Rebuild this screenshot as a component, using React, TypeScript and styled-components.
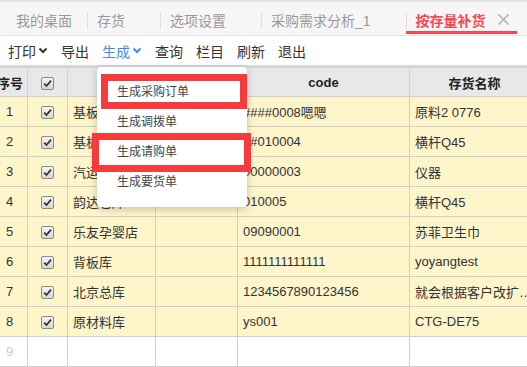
import React from 'react';
import styled, { createGlobalStyle } from 'styled-components';

const GlobalStyle = createGlobalStyle`
  html, body {
    margin: 0;
    padding: 0;
    background: #fff;
    overflow: hidden;
  }
  body {
    font-family: "Liberation Sans", "Noto Sans CJK SC", sans-serif;
    color: #333;
  }
`;

const Page = styled.div`
  position: relative;
  width: 527px;
  height: 367px;
  overflow: hidden;
`;

const TabBar = styled.div`
  display: flex;
  align-items: stretch;
  height: 33px;
  padding-left: 6px;
  background: #f6f6f6;
  border-top: 2px solid #e2e2e2;
  border-bottom: 1px solid #e6e6e6;
`;

const Tab = styled.div<{ $active?: boolean; $home?: boolean }>`
  position: relative;
  display: flex;
  align-items: center;
  padding: 2px ${p => (p.$home ? 15 : 10)}px 0 10px;
  font-size: 14px;
  white-space: nowrap;
  color: ${p => (p.$active ? '#f5484f' : '#999')};
  font-weight: ${p => (p.$active ? 'bold' : 'normal')};

  &::before {
    content: '';
    display: ${p => (p.$home ? 'none' : 'block')};
    position: absolute;
    left: 0;
    top: 10px;
    width: 1px;
    height: 17px;
    background: #dedede;
  }

  &::after {
    content: '';
    display: ${p => (p.$active ? 'block' : 'none')};
    position: absolute;
    left: 0;
    right: 4px;
    bottom: 1px;
    height: 3px;
    background: #f5484f;
  }
`;

const CloseSlot = styled.span<{ $visible?: boolean }>`
  display: inline-flex;
  width: 14px;
  margin-left: 11px;
  visibility: ${p => (p.$visible ? 'visible' : 'hidden')};
`;

const Toolbar = styled.div`
  display: flex;
  align-items: center;
  gap: 13px;
  height: 29px;
  padding-left: 8px;
  background: #fff;
  border-bottom: 2px solid #d9d9d9;
`;

const ToolItem = styled.span<{ $primary?: boolean }>`
  display: inline-flex;
  align-items: center;
  font-size: 14px;
  color: ${p => (p.$primary ? '#3b8cf5' : '#333')};
  white-space: nowrap;

  svg {
    margin-left: 2px;
  }
`;

const Grid = styled.div`
  overflow: hidden;
`;

const Table = styled.table`
  margin-left: -9px;
  width: 548px;
  table-layout: fixed;
  border-collapse: collapse;
  font-size: 13px;
`;

const HeadCell = styled.th`
  height: 28px;
  padding: 0 5px;
  background: #e8e8e8;
  border: 1px solid #cfcfcf;
  font-weight: bold;
  color: #222;
  text-align: center;
  white-space: nowrap;
  overflow: hidden;
`;

const Row = styled.tr<{ $empty?: boolean }>`
  background: ${p => (p.$empty ? '#fff' : '#fef5cb')};
`;

const Cell = styled.td<{ $center?: boolean; $muted?: boolean }>`
  height: 29px;
  padding: 0 5px;
  border: 1px solid #cfcfcf;
  color: ${p => (p.$muted ? '#ccc' : '#333')};
  text-align: ${p => (p.$center ? 'center' : 'left')};
  white-space: nowrap;
  overflow: hidden;
  text-overflow: ellipsis;
`;

const CheckBox = styled.span`
  display: inline-flex;
  align-items: center;
  justify-content: center;
  width: 11px;
  height: 11px;
  border: 1px solid #8a8a8a;
  border-radius: 2px;
  background: linear-gradient(#f5f5f5, #d6d6d6);
  vertical-align: middle;
`;

const Menu = styled.div`
  position: absolute;
  left: 97px;
  top: 67px;
  width: 150px;
  padding: 10px 0;
  background: #fff;
  border-radius: 4px;
  box-shadow: 0 2px 8px rgba(0, 0, 0, 0.22);
`;

const MenuItem = styled.div`
  height: 30px;
  line-height: 30px;
  padding-left: 20px;
  font-size: 12px;
  color: #444;
  white-space: nowrap;
`;

const Mark = styled.div<{ $left: number; $top: number; $w: number; $h: number }>`
  position: absolute;
  left: ${p => p.$left}px;
  top: ${p => p.$top}px;
  width: ${p => p.$w}px;
  height: ${p => p.$h}px;
  box-sizing: border-box;
  border: 7px solid #f53b3b;
`;

function Chevron({ color }: { color: string }) {
  return (
    <svg width="10" height="7" viewBox="0 0 10 7">
      <polyline points="1.5,1.5 5,5 8.5,1.5" fill="none" stroke={color} strokeWidth="2" />
    </svg>
  );
}

function CloseIcon() {
  return (
    <svg width="13" height="13" viewBox="0 0 13 13">
      <path d="M1.5 1.5 L11.5 11.5 M11.5 1.5 L1.5 11.5" stroke="#b0b0b0" strokeWidth="1.6" />
    </svg>
  );
}

function Check() {
  return (
    <CheckBox>
      <svg width="9" height="9" viewBox="0 0 9 9">
        <path d="M1.2 4.6 L3.5 7 L8 1.6" fill="none" stroke="#333" strokeWidth="1.8" />
      </svg>
    </CheckBox>
  );
}

const tabs = [
  { label: '我的桌面', home: true },
  { label: '存货' },
  { label: '选项设置' },
  { label: '采购需求分析_1' },
  { label: '按存量补货', active: true },
];

const rows = [
  { store: '基板库', code: '####0008嗯嗯', name: '原料2 0776' },
  { store: '基板仓', code: '0#010004', name: '横杆Q45' },
  { store: '汽运仓库', code: '00000003', name: '仪器' },
  { store: '韵达仓库', code: '010005', name: '横杆Q45' },
  { store: '乐友孕婴店', code: '09090001', name: '苏菲卫生巾' },
  { store: '背板库', code: '1111111111111', name: 'yoyangtest' },
  { store: '北京总库', code: '1234567890123456', name: '就会根据客户改扩展名称' },
  { store: '原材料库', code: 'ys001', name: 'CTG-DE75' },
];

const menuItems = ['生成采购订单', '生成调拨单', '生成请购单', '生成要货单'];

export default function App() {
  return (
    <Page>
      <GlobalStyle />
      <TabBar>
        {tabs.map(t => (
          <Tab key={t.label} $active={t.active} $home={t.home}>
            {t.label}
            {!t.home && (
              <CloseSlot $visible={t.active}>
                <CloseIcon />
              </CloseSlot>
            )}
          </Tab>
        ))}
      </TabBar>

      <Toolbar>
        <ToolItem>打印<Chevron color="#333" /></ToolItem>
        <ToolItem>导出</ToolItem>
        <ToolItem $primary>生成<Chevron color="#3b8cf5" /></ToolItem>
        <ToolItem>查询</ToolItem>
        <ToolItem>栏目</ToolItem>
        <ToolItem>刷新</ToolItem>
        <ToolItem>退出</ToolItem>
      </Toolbar>

      <Grid>
        <Table>
          <colgroup>
            <col style={{ width: 36 }} />
            <col style={{ width: 40 }} />
            <col style={{ width: 88 }} />
            <col style={{ width: 82 }} />
            <col style={{ width: 172 }} />
            <col style={{ width: 130 }} />
          </colgroup>
          <thead>
            <tr>
              <HeadCell>序号</HeadCell>
              <HeadCell><Check /></HeadCell>
              <HeadCell />
              <HeadCell />
              <HeadCell>code</HeadCell>
              <HeadCell>存货名称</HeadCell>
            </tr>
          </thead>
          <tbody>
            {rows.map((r, i) => (
              <Row key={i}>
                <Cell $center>{i + 1}</Cell>
                <Cell $center><Check /></Cell>
                <Cell>{r.store}</Cell>
                <Cell />
                <Cell>{r.code}</Cell>
                <Cell>{r.name}</Cell>
              </Row>
            ))}
            <Row $empty>
              <Cell $center $muted>9</Cell>
              <Cell />
              <Cell />
              <Cell />
              <Cell />
              <Cell />
            </Row>
          </tbody>
        </Table>
      </Grid>

      <Menu>
        {menuItems.map(m => (
          <MenuItem key={m}>{m}</MenuItem>
        ))}
      </Menu>

      <Mark $left={101} $top={74} $w={146} $h={35} />
      <Mark $left={92} $top={133} $w={159} $h={39} />
    </Page>
  );
}
